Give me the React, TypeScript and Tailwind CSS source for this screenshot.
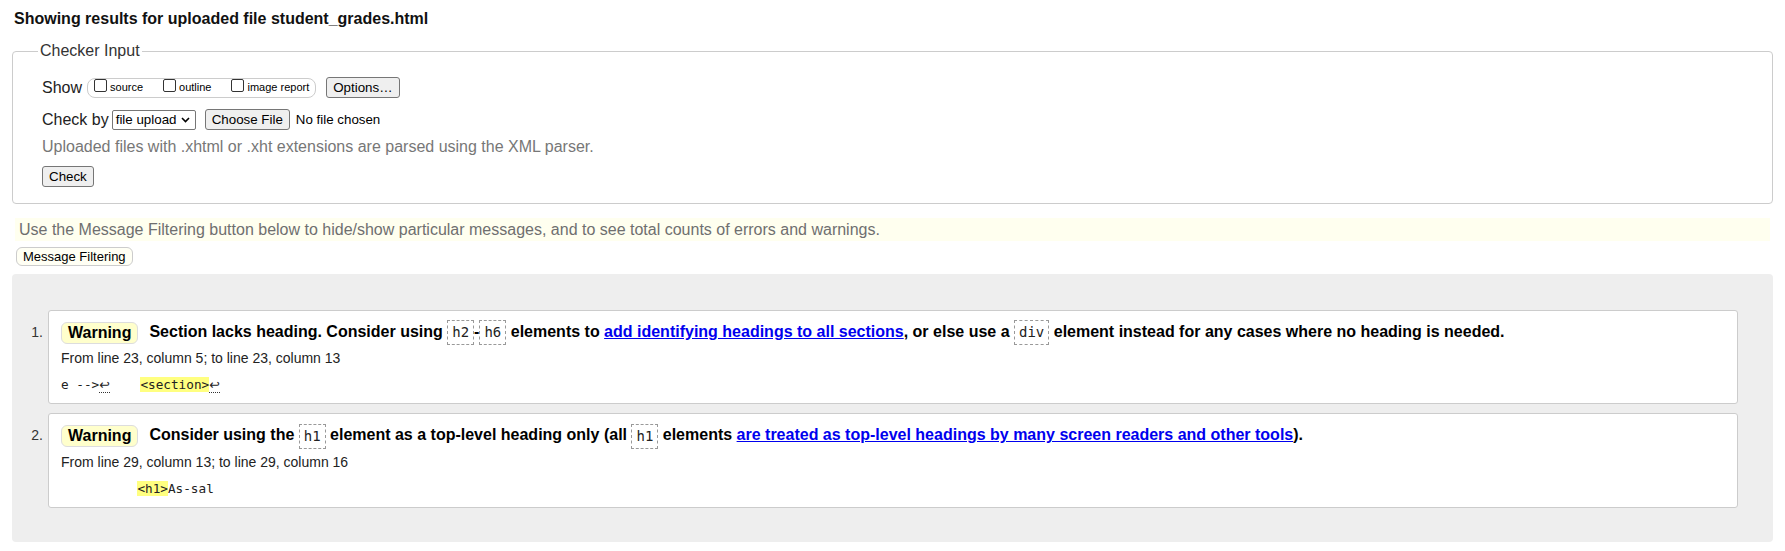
import { ReactNode } from 'react'

const Code = ({ children }: { children: ReactNode }) => (
  <code className="inline-block align-middle border border-dashed border-[#999] px-[4px] py-[3px] leading-[17px] font-normal text-[14px] text-[#222] font-['DejaVu_Sans_Mono',monospace]">
    {children}
  </code>
)

const Badge = () => (
  <span className="inline-block align-middle mr-[11px] px-[6px] leading-[20px] bg-[#ffffcc] border border-[#ddd] rounded-[6px]">
    Warning
  </span>
)

const Ret = () => (
  <span className="border-b border-dotted border-[#333] font-['DejaVu_Sans',sans-serif]">↩</span>
)

const Mark = ({ children }: { children: ReactNode }) => (
  <span className="bg-[#ffff80]">{children}</span>
)

type MessageProps = {
  index: number
  children: ReactNode
  location: string
  extract: ReactNode
}

const Message = ({ index, children, location, extract }: MessageProps) => (
  <li className="flex">
    <span className="w-[36px] shrink-0 pr-[5px] pt-[9px] text-right text-[14px] leading-[26px] text-[#333]">
      {index}.
    </span>
    <div className="flex-1 bg-white border border-[#ccc] rounded-[3px] pl-[12px] pt-[8px] pb-[10px]">
      <p className="leading-[26px] font-bold text-black">
        <Badge />
        {children}
      </p>
      <p className="mt-[5px] text-[14px] leading-[17px] text-[#222]">{location}</p>
      <p className="mt-[10px] text-[12.7px] leading-[16px] whitespace-pre text-[#222] font-['DejaVu_Sans_Mono',monospace]">
        {extract}
      </p>
    </div>
  </li>
)

const Checkbox = ({ label }: { label: string }) => (
  <label className="flex items-center">
    <span className="w-[13px] h-[13px] mr-[3px] mb-[4px] border border-[#333] rounded-[2px] bg-white" />
    <span className="text-[11px] leading-[13px] text-black">{label}</span>
  </label>
)

const btn =
  'flex items-center justify-center h-[21px] px-[6px] bg-[#efefef] border border-[#767676] rounded-[3px] text-[13.33px] text-black'

export default function App() {
  return (
    <div className="min-h-[551px] bg-white px-3 font-['Liberation_Sans',Arial,sans-serif] text-base text-[#222]">
      <h2 className="pt-[10px] pl-[2px] font-bold leading-[18px] text-[#111]">
        Showing results for uploaded file student_grades.html
      </h2>

      <fieldset className="mt-[14px] border border-[#ccc] rounded-[4px] pl-[29px] pr-4 pb-[16px]">
        <legend className="-ml-1 px-[2px] leading-[18px] text-[#333]">Checker Input</legend>

        <div className="mt-[16px] flex items-center h-[23px]">
          <span>Show</span>
          <span className="ml-[5px] flex items-center gap-[20px] h-[20px] px-[6px] border border-[#ccc] rounded-[8px]">
            <Checkbox label="source" />
            <Checkbox label="outline" />
            <Checkbox label="image report" />
          </span>
          <button className={`ml-[10px] ${btn}`}>Options…</button>
        </div>

        <div className="mt-[10px] flex items-center h-[21px]">
          <span>Check by</span>
          <span className="ml-[3px] flex items-center justify-between w-[84px] h-[20px] pl-[3px] pr-[5px] border border-[#767676] rounded-[2px] bg-white text-[13.33px] text-black">
            file upload
            <svg width="9" height="6" viewBox="0 0 9 6" fill="none">
              <path d="M1 1l3.5 3.5L8 1" stroke="#000" strokeWidth="1.6" />
            </svg>
          </span>
          <button className={`ml-[9px] ${btn}`}>Choose File</button>
          <span className="ml-[6px] text-[13.33px] text-black">No file chosen</span>
        </div>

        <p className="mt-[8px] leading-[18px] text-[#777]">
          Uploaded files with .xhtml or .xht extensions are parsed using the XML parser.
        </p>

        <button className={`mt-[10px] ${btn}`}>Check</button>
      </fieldset>

      <p className="mt-[14px] mx-[3px] h-[23px] pl-[4px] flex items-center bg-[#ffffef] text-[#6f6f6f]">
        Use the Message Filtering button below to hide/show particular messages, and to see total counts of errors and warnings.
      </p>

      <button className="mt-[6px] ml-[4px] flex items-center h-[19px] px-[6px] border border-[#ccc] rounded-[6px] bg-[#fffff4] text-[13px] text-black">
        Message Filtering
      </button>

      <ol className="mt-[8px] flex flex-col gap-[9px] bg-[#eee] rounded-[4px] pt-[36px] pb-[34px] pr-[35px]">
        <Message
          index={1}
          location="From line 23, column 5; to line 23, column 13"
          extract={
            <>
              e --&gt;<Ret />    <Mark>&lt;section&gt;</Mark>
              <Ret />
            </>
          }
        >
          Section lacks heading. Consider using <Code>h2</Code>-<Code>h6</Code> elements to{' '}
          <a href="#" className="text-[#00e] underline">
            add identifying headings to all sections
          </a>
          , or else use a <Code>div</Code> element instead for any cases where no heading is needed.
        </Message>

        <Message
          index={2}
          location="From line 29, column 13; to line 29, column 16"
          extract={
            <>
              {'          '}
              <Mark>&lt;h1&gt;</Mark>As-sal
            </>
          }
        >
          Consider using the <Code>h1</Code> element as a top-level heading only (all <Code>h1</Code> elements{' '}
          <a href="#" className="text-[#00e] underline">
            are treated as top-level headings by many screen readers and other tools
          </a>
          ).
        </Message>
      </ol>
    </div>
  )
}
